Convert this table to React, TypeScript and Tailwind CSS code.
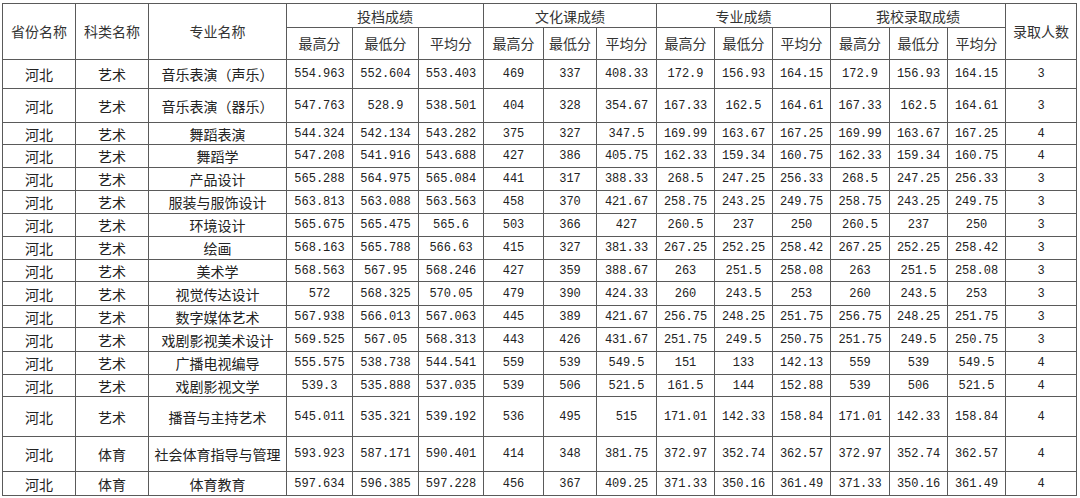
const widths = [
  "w-[73px]", "w-[73px]", "w-[138px]",
  "w-[66px]", "w-[66px]", "w-[65px]",
  "w-[60px]", "w-[53px]", "w-[60px]",
  "w-[58px]", "w-[58px]", "w-[58px]",
  "w-[59px]", "w-[58px]", "w-[58px]",
  "w-[71px]",
];

type Row = { h: string; prov: string; kind: string; major: string; nums: string[] };

const rows: Row[] = [
  { h: "h-[29px]", prov: "河北", kind: "艺术", major: "音乐表演（声乐）", nums: ["554.963", "552.604", "553.403", "469", "337", "408.33", "172.9", "156.93", "164.15", "172.9", "156.93", "164.15", "3"] },
  { h: "h-[34px]", prov: "河北", kind: "艺术", major: "音乐表演（器乐）", nums: ["547.763", "528.9", "538.501", "404", "328", "354.67", "167.33", "162.5", "164.61", "167.33", "162.5", "164.61", "3"] },
  { h: "h-[22px]", prov: "河北", kind: "艺术", major: "舞蹈表演", nums: ["544.324", "542.134", "543.282", "375", "327", "347.5", "169.99", "163.67", "167.25", "169.99", "163.67", "167.25", "4"] },
  { h: "h-[23px]", prov: "河北", kind: "艺术", major: "舞蹈学", nums: ["547.208", "541.916", "543.688", "427", "386", "405.75", "162.33", "159.34", "160.75", "162.33", "159.34", "160.75", "4"] },
  { h: "h-[23px]", prov: "河北", kind: "艺术", major: "产品设计", nums: ["565.288", "564.975", "565.084", "441", "317", "388.33", "268.5", "247.25", "256.33", "268.5", "247.25", "256.33", "3"] },
  { h: "h-[23px]", prov: "河北", kind: "艺术", major: "服装与服饰设计", nums: ["563.813", "563.088", "563.563", "458", "370", "421.67", "258.75", "243.25", "249.75", "258.75", "243.25", "249.75", "3"] },
  { h: "h-[23px]", prov: "河北", kind: "艺术", major: "环境设计", nums: ["565.675", "565.475", "565.6", "503", "366", "427", "260.5", "237", "250", "260.5", "237", "250", "3"] },
  { h: "h-[23px]", prov: "河北", kind: "艺术", major: "绘画", nums: ["568.163", "565.788", "566.63", "415", "327", "381.33", "267.25", "252.25", "258.42", "267.25", "252.25", "258.42", "3"] },
  { h: "h-[22px]", prov: "河北", kind: "艺术", major: "美术学", nums: ["568.563", "567.95", "568.246", "427", "359", "388.67", "263", "251.5", "258.08", "263", "251.5", "258.08", "3"] },
  { h: "h-[24px]", prov: "河北", kind: "艺术", major: "视觉传达设计", nums: ["572", "568.325", "570.05", "479", "390", "424.33", "260", "243.5", "253", "260", "243.5", "253", "3"] },
  { h: "h-[22px]", prov: "河北", kind: "艺术", major: "数字媒体艺术", nums: ["567.938", "566.013", "567.063", "445", "389", "421.67", "256.75", "248.25", "251.75", "256.75", "248.25", "251.75", "3"] },
  { h: "h-[24px]", prov: "河北", kind: "艺术", major: "戏剧影视美术设计", nums: ["569.525", "567.05", "568.313", "443", "426", "431.67", "251.75", "249.5", "250.75", "251.75", "249.5", "250.75", "3"] },
  { h: "h-[23px]", prov: "河北", kind: "艺术", major: "广播电视编导", nums: ["555.575", "538.738", "544.541", "559", "539", "549.5", "151", "133", "142.13", "559", "539", "549.5", "4"] },
  { h: "h-[22px]", prov: "河北", kind: "艺术", major: "戏剧影视文学", nums: ["539.3", "535.888", "537.035", "539", "506", "521.5", "161.5", "144", "152.88", "539", "506", "521.5", "4"] },
  { h: "h-[40px]", prov: "河北", kind: "艺术", major: "播音与主持艺术", nums: ["545.011", "535.321", "539.192", "536", "495", "515", "171.01", "142.33", "158.84", "171.01", "142.33", "158.84", "4"] },
  { h: "h-[35px]", prov: "河北", kind: "体育", major: "社会体育指导与管理", nums: ["593.923", "587.171", "590.401", "414", "348", "381.75", "372.97", "352.74", "362.57", "372.97", "352.74", "362.57", "4"] },
  { h: "h-[24px]", prov: "河北", kind: "体育", major: "体育教育", nums: ["597.634", "596.385", "597.228", "456", "367", "409.25", "371.33", "350.16", "361.49", "371.33", "350.16", "361.49", "4"] },
];

const groups = ["投档成绩", "文化课成绩", "专业成绩", "我校录取成绩"];
const sub = ["最高分", "最低分", "平均分"];

const cn = "[font-family:'Noto_Sans_CJK_SC',sans-serif]";
const num = "[font-family:'Liberation_Mono','Noto_Sans_CJK_SC',monospace]";

export default function App() {
  return (
    <div className="min-h-screen bg-white pl-[2px] pt-[3px]">
      <table className="table-fixed border-collapse border border-[#5a5a5a] text-center text-[#222]">
        <colgroup>
          {widths.map((w, i) => (
            <col key={i} className={w} />
          ))}
        </colgroup>
        <thead className={`${cn} text-[14px] text-[#333]`}>
          <tr className="h-[24px]">
            <th rowSpan={2} className="border border-[#5a5a5a] p-0 font-normal">省份名称</th>
            <th rowSpan={2} className="border border-[#5a5a5a] p-0 font-normal">科类名称</th>
            <th rowSpan={2} className="border border-[#5a5a5a] p-0 font-normal">专业名称</th>
            {groups.map((g) => (
              <th key={g} colSpan={3} className="border border-[#5a5a5a] p-0 font-normal leading-none">
                {g}
              </th>
            ))}
            <th rowSpan={2} className="border border-[#5a5a5a] p-0 font-normal">录取人数</th>
          </tr>
          <tr className="h-[32px]">
            {groups.map((g) =>
              sub.map((s) => (
                <th key={g + s} className="border border-[#5a5a5a] p-0 font-normal">
                  {s}
                </th>
              ))
            )}
          </tr>
        </thead>
        <tbody>
          {rows.map((r, i) => (
            <tr key={i} className={r.h}>
              <td className={`${cn} border border-[#5a5a5a] p-0 text-[14px] leading-none`}>{r.prov}</td>
              <td className={`${cn} border border-[#5a5a5a] p-0 text-[14px] leading-none`}>{r.kind}</td>
              <td className={`${cn} border border-[#5a5a5a] p-0 text-[14px] leading-none`}>{r.major}</td>
              {r.nums.map((n, j) => (
                <td key={j} className={`${num} border border-[#5a5a5a] p-0 text-[12px] leading-none`}>
                  {n}
                </td>
              ))}
            </tr>
          ))}
        </tbody>
      </table>
    </div>
  );
}
